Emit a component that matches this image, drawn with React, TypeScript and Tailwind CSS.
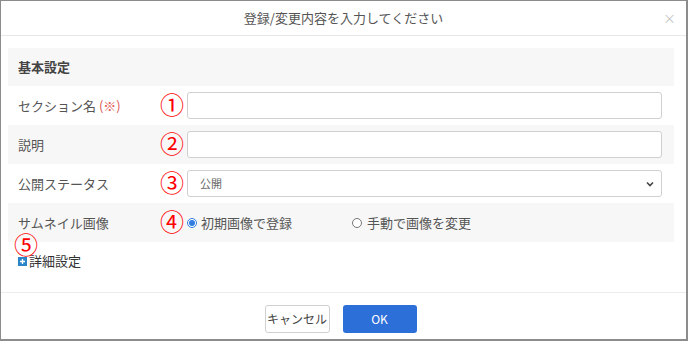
const jp = { fontFamily: '"Noto Sans CJK JP", "Noto Sans", sans-serif' };

function Mark({ n, className }: { n: string; className: string }) {
  return (
    <span
      className={`absolute text-[24px] leading-[18px] text-[#ff0000] ${className}`}
      style={jp}
    >
      {n}
    </span>
  );
}

function Row({
  label,
  mark,
  gray,
  children,
}: {
  label: React.ReactNode;
  mark: string;
  gray?: boolean;
  children: React.ReactNode;
}) {
  return (
    <div className={`relative flex h-[39px] items-center ${gray ? 'bg-[#f7f7f7]' : 'bg-white'}`}>
      <div className="w-[179px] shrink-0 pl-[10px] text-[13px] leading-[16px] text-[#555]">{label}</div>
      <Mark n={mark} className="left-[152px] top-[9px]" />
      <div className="flex-1 pr-[12px]">{children}</div>
    </div>
  );
}

export default function App() {
  return (
    <div
      className="flex h-[341px] w-[688px] flex-col border-b-2 border-l border-r-2 border-t border-[#8c8c8c] bg-white"
      style={jp}
    >
      <div className="relative flex h-[35px] shrink-0 items-center justify-center border-b border-[#e8e8e8]">
        <span className="text-[13px] text-[#555]">登録/変更内容を入力してください</span>
        <span className="absolute right-[10px] top-[7px] text-[13px] text-[#c4c4c4]">×</span>
      </div>

      <div className="flex flex-1 flex-col pl-[7px] pr-[12px] pt-[12px]">
        <div className="flex h-[38px] items-center bg-[#f7f7f7] pl-[10px] text-[13px] font-bold text-[#444]">
          基本設定
        </div>
        <Row label={<>セクション名 <span className="text-[#e05555]">(※)</span></>} mark="①">
          <div className="h-[27px] rounded-[3px] border border-[#d0d0d0] bg-white" />
        </Row>
        <Row label="説明" mark="②" gray>
          <div className="h-[27px] rounded-[3px] border border-[#d0d0d0] bg-white" />
        </Row>
        <Row label="公開ステータス" mark="③">
          <div className="flex h-[27px] items-center justify-between rounded-[3px] border border-[#d0d0d0] bg-white pl-[12px] pr-[6px]">
            <span className="text-[11px] text-[#666]">公開</span>
            <svg width="10" height="10" viewBox="0 0 10 10">
              <path d="M2 3.5 L5 6.5 L8 3.5" fill="none" stroke="#444" strokeWidth="1.6" />
            </svg>
          </div>
        </Row>
        <Row label="サムネイル画像" mark="④" gray>
          <div className="flex items-center text-[13px] text-[#555]">
            <span className="flex h-[10px] w-[10px] items-center justify-center rounded-full border border-[#2f7de1] bg-white">
              <span className="h-[6px] w-[6px] rounded-full bg-[#2f7de1]" />
            </span>
            <span className="ml-[4px]">初期画像で登録</span>
            <span className="ml-[60px] h-[10px] w-[10px] rounded-full border border-[#777] bg-white" />
            <span className="ml-[5px]">手動で画像を変更</span>
          </div>
        </Row>
        <div className="relative mt-[10px] flex h-[18px] items-center pl-[10px] text-[13px] leading-[16px] text-[#333]">
          <Mark n="⑤" className="left-[6px] top-[-17px]" />
          <span className="mr-[2px] flex h-[9px] w-[9px] items-center justify-center bg-[#2b84c9]">
            <svg width="7" height="7" viewBox="0 0 7 7">
              <path d="M3.5 1 V6 M1 3.5 H6" stroke="#fff" strokeWidth="1.4" />
            </svg>
          </span>
          詳細設定
        </div>
      </div>

      <div className="flex h-[47px] shrink-0 justify-center gap-[13px] border-t border-[#ececec] pr-[6px] pt-[12px]">
        <button className="h-[28px] w-[65px] rounded-[3px] border border-[#d0d0d0] bg-white text-[12px] text-[#444]">
          キャンセル
        </button>
        <button className="h-[28px] w-[74px] rounded-[3px] bg-[#2d6fd8] text-[12px] text-white">
          OK
        </button>
      </div>
    </div>
  );
}
